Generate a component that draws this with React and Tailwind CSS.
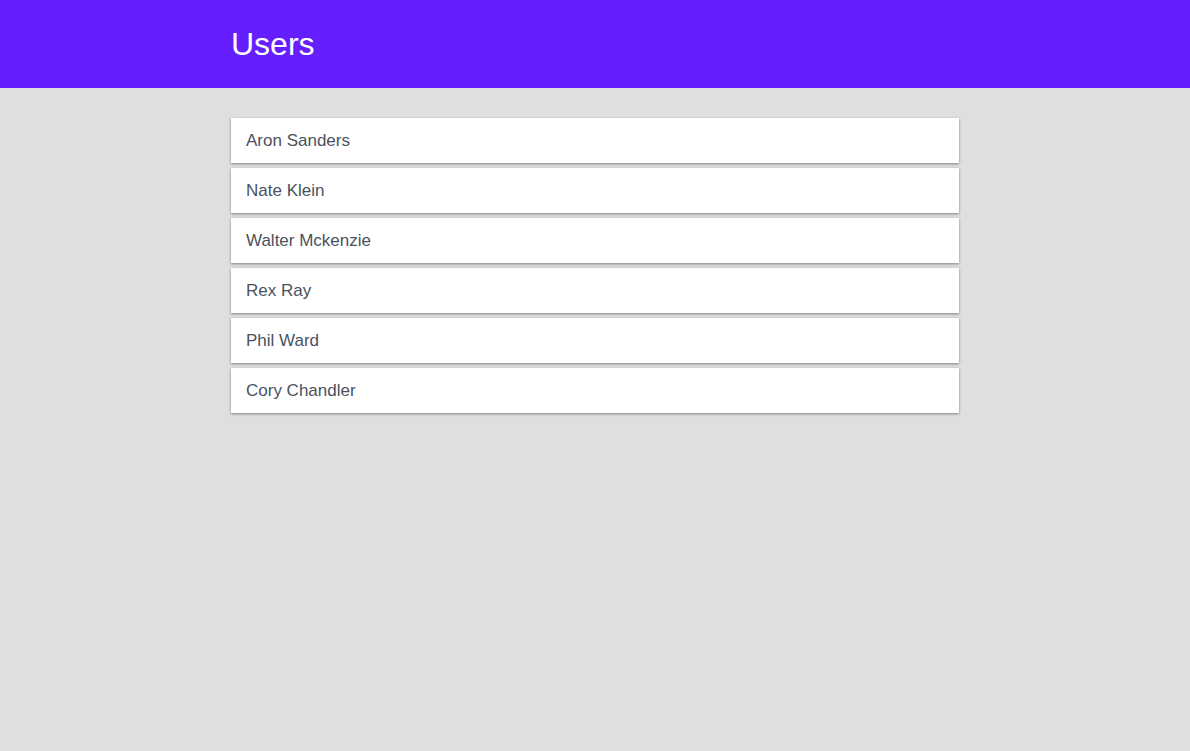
export default function App() {
  const users = ["Aron Sanders", "Nate Klein", "Walter Mckenzie", "Rex Ray", "Phil Ward", "Cory Chandler"];
  return (
    <div className="min-h-[751px] bg-[#dfdfdf]" style={{ fontFamily: '"Liberation Sans", Arial, sans-serif' }}>
      <header className="h-[88px] bg-[#651fff] flex items-center">
        <div className="w-[728px] mx-auto">
          <h1 className="text-[32px] leading-none text-white pb-[1px]">Users</h1>
        </div>
      </header>
      <div className="w-[728px] mx-auto pt-[30px] flex flex-col gap-[5px]">
        {users.map((u) => (
          <div key={u} className="h-[45px] bg-white flex items-center px-[15px] text-[17px] text-[#4a5260] shadow-[0_1px_3px_rgba(0,0,0,0.25),0_1px_2px_rgba(0,0,0,0.2)]">
            {u}
          </div>
        ))}
      </div>
    </div>
  );
}
